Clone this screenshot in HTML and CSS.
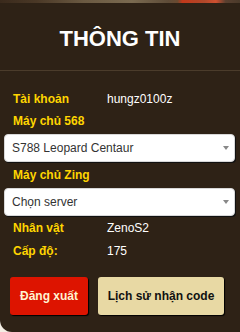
FILE: index.html
```html
<!DOCTYPE html>
<html lang="vi">
<head>
<meta charset="utf-8">
<title>Thông tin</title>
<link rel="stylesheet" href="styles.css">
</head>
<body>
<div class="banner"></div>
<section class="panel">
  <h1 class="panel-title">THÔNG TIN</h1>
  <div class="info">
    <div class="row row-first"><span class="label">Tài khoản</span><span class="value">hungz0100z</span></div>
    <div class="row"><span class="label">Máy chủ 568</span></div>
    <div class="select-wrap">
      <select class="server-select"><option>S788 Leopard Centaur</option></select>
    </div>
    <div class="row"><span class="label">Máy chủ Zing</span></div>
    <div class="select-wrap">
      <select class="server-select"><option>Chọn server</option></select>
    </div>
    <div class="row row-tight"><span class="label">Nhân vật</span><span class="value">ZenoS2</span></div>
    <div class="row row-level"><span class="label">Cấp độ:</span><span class="value">175</span></div>
    <div class="actions">
      <button class="btn btn-logout">Đăng xuất</button>
      <button class="btn btn-history">Lịch sử nhận code</button>
    </div>
  </div>
</section>
</body>
</html>
```
FILE: styles.css
```css
html, body {
  margin: 0;
  padding: 0;
}
body {
  width: 240px;
  height: 332px;
  overflow: hidden;
  background: #f3eee4;
  font-family: "Liberation Sans", Arial, sans-serif;
}
.banner {
  height: 3px;
  background: linear-gradient(90deg, #3a2a1c 0%, #4a3826 15%, #6b5a42 35%, #7a6a50 55%, #5e4c38 70%, #6a4a30 74%, #c2381a 76%, #b0482a 85%, #d05030 90%, #5a4030 94%, #4a3a2a 100%);
}
.panel {
  height: 329px;
  background: #2e2216;
  border-bottom-left-radius: 12px;
}
.panel-title {
  margin: 0;
  padding: 23px 0 18px;
  line-height: 26px;
  font-size: 22px;
  font-weight: bold;
  color: #ffffff;
  text-align: center;
  border-bottom: 1px solid #4b3c2b;
}
.info {
  padding: 20px 5px 0 4px;
}
.row {
  display: flex;
  line-height: 16px;
  font-size: 12px;
  padding-left: 9px;
  margin-bottom: 5px;
}
.row-first {
  margin-bottom: 6px;
}
.row-tight {
  margin-top: -1px;
  margin-bottom: 7px;
}
.row-level {
  margin-bottom: 18px;
}
.label {
  width: 94px;
  font-weight: bold;
  color: #ffd500;
}
.value {
  color: #ffffff;
}
.select-wrap {
  position: relative;
  margin-bottom: 5px;
}
.select-wrap::after {
  content: "";
  position: absolute;
  right: 6px;
  top: 12px;
  border-left: 3px solid transparent;
  border-right: 3px solid transparent;
  border-top: 4px solid #888888;
  pointer-events: none;
}
.server-select {
  display: block;
  width: 100%;
  height: 28px;
  margin: 0;
  padding: 0 20px 0 7px;
  -webkit-appearance: none;
  appearance: none;
  background: #ffffff;
  border: 1px solid #d8d8d8;
  border-radius: 4px;
  box-shadow: 1px 1px 0 #111;
  font-family: "Liberation Sans", Arial, sans-serif;
  font-size: 12px;
  color: #333333;
}
.actions {
  display: flex;
  gap: 10px;
  padding-left: 6px;
}
.btn {
  height: 38px;
  margin: 0;
  border: 0;
  border-radius: 3px;
  box-shadow: 1px 1px 1px #000;
  font-family: "Liberation Sans", Arial, sans-serif;
  font-size: 12px;
  font-weight: bold;
}
.btn-logout {
  width: 78px;
  background: #dd1400;
  color: #fff3d2;
}
.btn-history {
  width: 126px;
  background: #e8d9a4;
  color: #111111;
}
```
